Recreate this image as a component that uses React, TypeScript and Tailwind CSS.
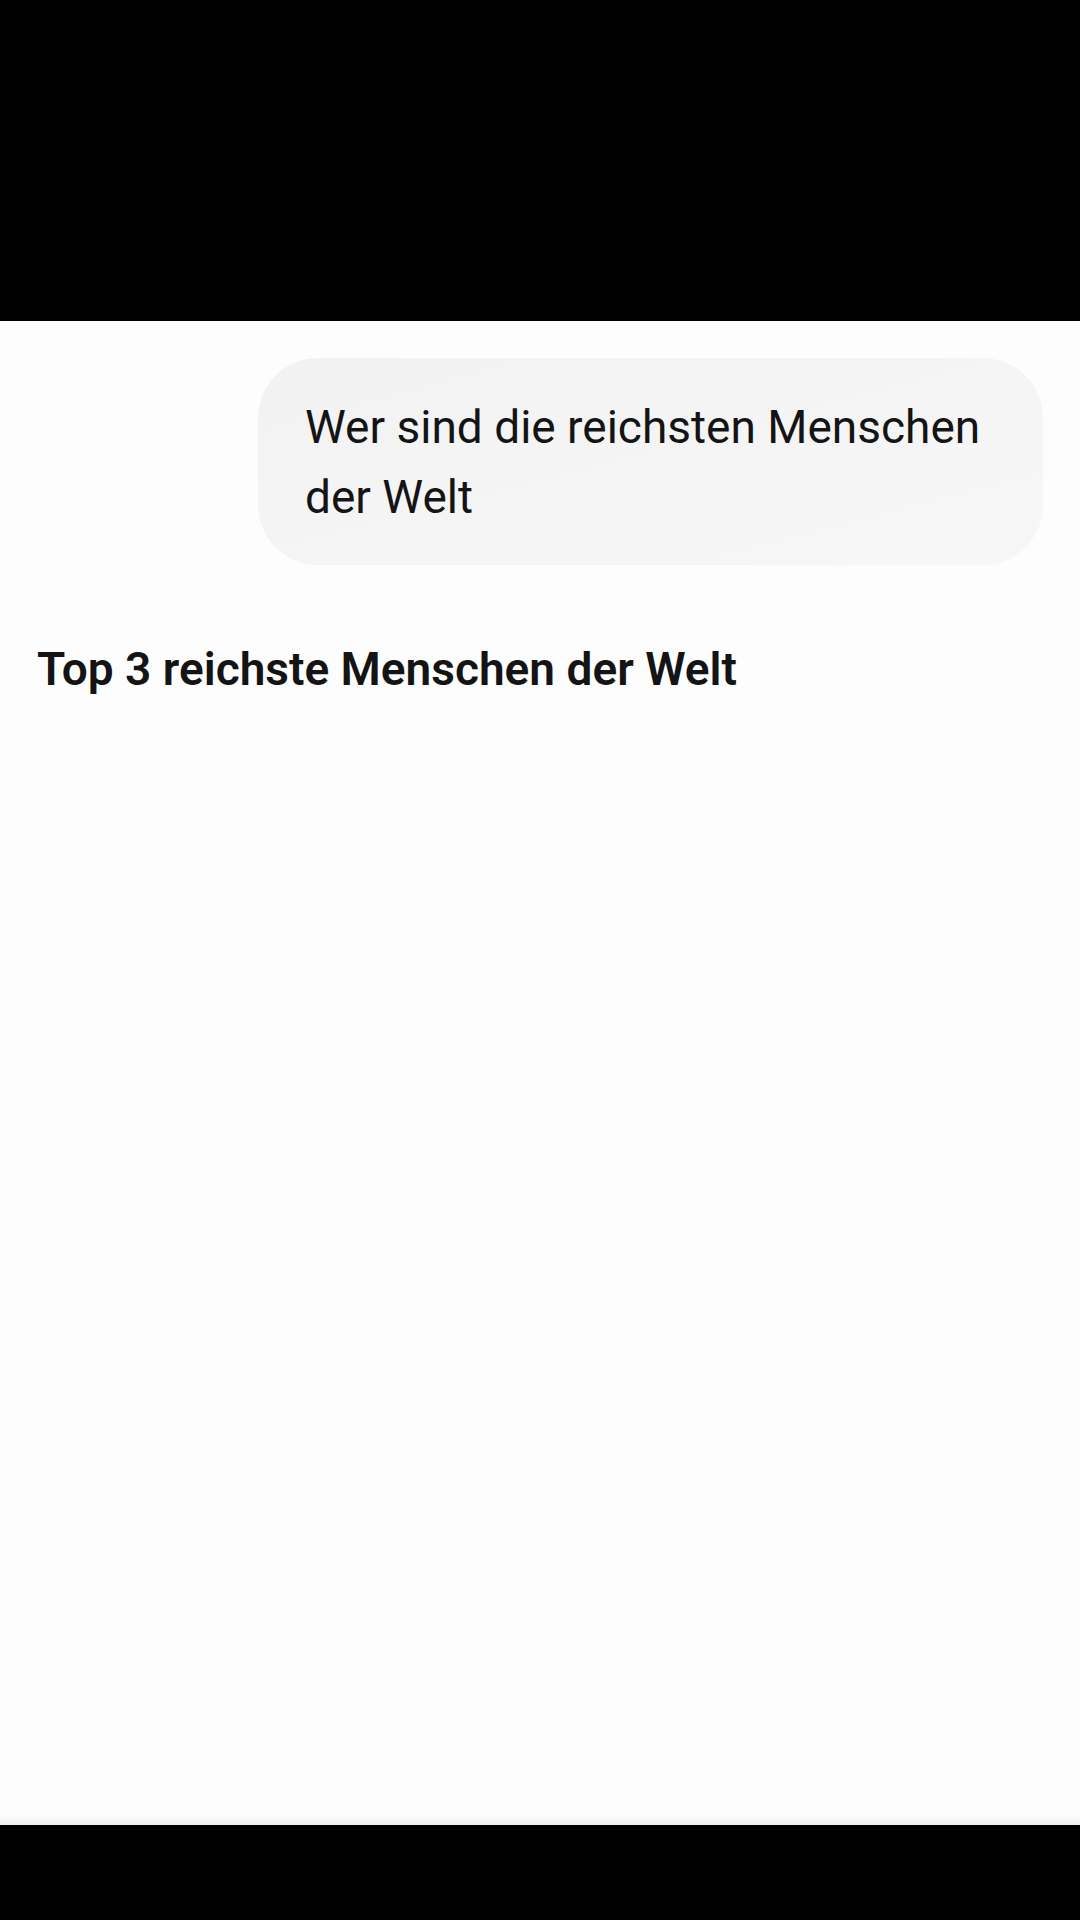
import React from "react";

export default function App() {
  return (
    <div className="w-[1080px] h-[1920px] flex flex-col bg-[#fdfdfd]" style={{ fontFamily: 'Roboto, "Noto Sans", sans-serif' }}>
      <div className="h-[321px] bg-black shrink-0" />
      <div className="flex-1 flex flex-col bg-[#fdfdfd] relative">
        <div className="pt-[37px] pr-[37px] flex justify-end">
          <div className="w-[785px] rounded-[60px] bg-gradient-to-br from-[#f2f2f2] to-[#f7f7f7] pl-[47px] pr-[30px] pt-[34px] pb-[33px] text-[46px] leading-[70px] text-[#141414]">
            Wer sind die reichsten Menschen der Welt
          </div>
        </div>
        <h1 className="mt-[74px] pl-[37px] text-[46px] leading-[60px] font-semibold text-[#141414]">
          Top 3 reichste Menschen der Welt
        </h1>
        <div className="flex-1" />
        <div className="h-[10px] bg-gradient-to-b from-[#fdfdfd] to-[#efefef]" />
      </div>
      <div className="h-[95px] bg-black shrink-0" />
    </div>
  );
}
